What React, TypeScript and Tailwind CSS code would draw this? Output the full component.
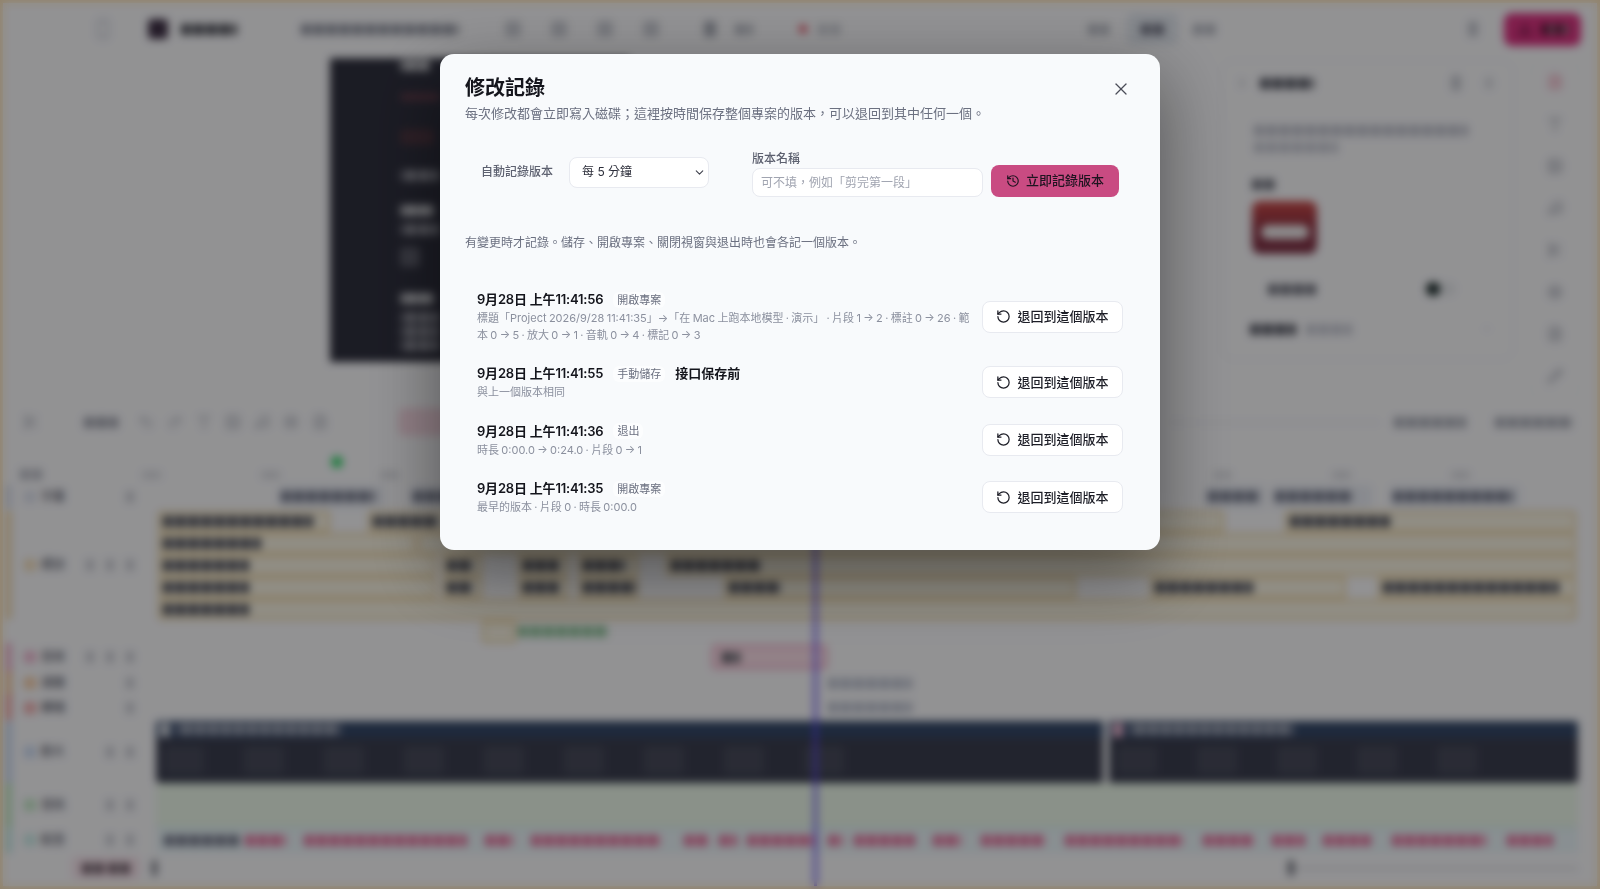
import {
  ChevronDown,
  ChevronRight,
  Download,
  FileText,
  History,
  Image,
  Music,
  Pencil,
  Redo2,
  RotateCcw,
  Scissors,
  Settings,
  Type,
  Undo2,
  X,
} from "lucide-react";

const FONT = "font-['Inter','Noto_Sans_CJK_TC',sans-serif]";

// =============================================================================
// BLURRED EDITOR BEHIND THE DIALOG
// =============================================================================

// Stands in for text that the blur has made unreadable
function Bar({ w, className = "bg-[#4a4c58]" }: { w: number; className?: string }) {
  return (
    <div
      className={`h-[11px] shrink-0 rounded-[2px] bg-[repeating-linear-gradient(90deg,transparent_0_9px,rgba(255,255,255,0.5)_9px_13px)] ${className}`}
      style={{ width: w }}
    />
  );
}

function TopBar() {
  return (
    <div className="flex h-[52px] shrink-0 items-center pl-[94px] pr-[16px]">
      <div className="h-5 w-3 rounded-[3px] border-2 border-[#bfc3cf]" />
      <div className="ml-[39px] h-5 w-5 rounded-[4px] bg-[#3d2f44]" />
      <Bar w={56} className="ml-[13px] bg-[#45464f]" />
      <Bar w={158} className="ml-[64px] bg-[#8b8e9b]" />
      <div className="ml-[46px] flex gap-[30px]">
        {[0, 1, 2, 3].map((i) => (
          <div key={i} className="h-4 w-4 rounded-[3px] bg-[#c6c8d0]" />
        ))}
      </div>
      <div className="ml-[45px] h-4 w-3 rounded-[3px] bg-[#a4a7b2]" />
      <Bar w={18} className="ml-[19px] bg-[#b0b3bd]" />
      <div className="ml-[46px] h-2 w-2 rounded-full bg-[#e0475c]" />
      <Bar w={23} className="ml-[11px] bg-[#c6c8d0]" />
      <div className="ml-auto flex items-center">
        <Bar w={21} className="bg-[#b0b3bd]" />
        <div className="ml-[18px] flex h-[32px] w-[51px] items-center justify-center rounded-md bg-[#dde2ea]">
          <Bar w={24} className="bg-[#6a6d7e]" />
        </div>
        <Bar w={23} className="ml-[15px] bg-[#b0b3bd]" />
        <div className="ml-[252px] h-4 w-[10px] rounded-[3px] bg-[#c0c2cb]" />
        <div className="ml-[26px] flex h-[33px] w-[77px] items-center justify-center gap-2 rounded-lg bg-[#d6337f]">
          <Download className="h-4 w-4 text-[#4a1030]" />
          <Bar w={28} className="bg-[#5a1638]" />
        </div>
      </div>
    </div>
  );
}

function PreviewArea() {
  return (
    <div className="flex h-[349px] shrink-0">
      {/* video preview, mostly hidden by the dialog */}
      <div className="ml-[327px] mt-[3px] h-[304px] w-[300px] shrink-0 bg-[#2e2f3d] pl-[70px] pt-[2px]">
        <Bar w={30} className="bg-[#a0a1a8]" />
        <div className="mt-[22px] h-2 w-[40px] rounded-sm bg-[#5c3a48]" />
        <div className="mt-[28px] h-4 w-[34px] rounded-sm bg-[#4c3540]" />
        <Bar w={38} className="mt-[25px] bg-[#6a6b78]" />
        <Bar w={34} className="mt-[24px] bg-[#a8a9b0]" />
        <Bar w={38} className="mt-[8px] bg-[#6a6b78]" />
        <div className="mt-[12px] h-5 w-5 rounded bg-[#5a5b68]" />
        <Bar w={34} className="mt-[26px] bg-[#a8a9b0]" />
        <Bar w={38} className="mt-[8px] bg-[#6a6b78]" />
        <Bar w={38} className="mt-[3px] bg-[#6a6b78]" />
        <Bar w={38} className="mt-[3px] bg-[#6a6b78]" />
      </div>

      {/* inspector panel */}
      <div className="ml-auto mt-[5px] flex h-[300px] w-[293px] shrink-0 flex-col rounded-xl border border-[#e6e7ec] pl-[12px] pr-[20px] pt-[14px]">
        <div className="flex h-4 items-center">
          <ChevronRight className="h-4 w-4 text-[#a4a7b2]" />
          <Bar w={54} className="ml-[10px] bg-[#4f515d]" />
          <div className="ml-auto h-4 w-[10px] rounded-[3px] bg-[#c4c6ce]" />
          <div className="ml-[24px] h-3 w-2 rounded-[2px] bg-[#d4d6dc]" />
        </div>
        <div className="ml-[18px] flex flex-col">
          <Bar w={214} className="ml-[2px] mt-[34px] bg-[#b8bac6]" />
          <Bar w={84} className="ml-[2px] mt-[6px] bg-[#c0c2cd]" />
          <Bar w={23} className="mt-[26px] bg-[#6a6c78]" />
          <div className="mt-[11px] h-[53px] w-[65px] overflow-hidden rounded-lg bg-gradient-to-b from-[#c84a48] via-[#8a3040] to-[#7a3348] pt-[24px]">
            <div className="mx-auto h-[14px] w-[48px] rounded-full bg-[#ece9ea]" />
          </div>
        </div>
        <div className="mt-[28px] flex h-[14px] items-center pl-[34px]">
          <Bar w={48} className="bg-[#6a6c78]" />
          <div className="ml-[110px] flex h-[14px] w-[30px] items-center rounded-full bg-[#e2e4e8]">
            <div className="h-[14px] w-[14px] rounded-full bg-[#1b2a2a]" />
          </div>
        </div>
        <div className="mt-[26px] flex h-[14px] items-center pl-[16px]">
          <Bar w={46} className="bg-[#4f515d]" />
          <Bar w={46} className="ml-[10px] bg-[#c0c2cd]" />
          <ChevronDown className="ml-auto h-3 w-3 text-[#c4c6ce]" />
        </div>
      </div>

      {/* tool rail */}
      <div className="ml-[16px] mr-[17px] mt-[8px] flex h-[334px] w-[50px] shrink-0 flex-col items-center gap-[26px] rounded-xl border border-[#eeeff2] pt-[10px] text-[#9497a4]">
        <FileText className="h-4 w-4 text-[#e8859f]" />
        <Type className="h-4 w-4" />
        <Image className="h-4 w-4" />
        <Music className="h-4 w-4" />
        <Scissors className="h-4 w-4" />
        <Settings className="h-4 w-4" />
        <FileText className="h-4 w-4" />
        <Pencil className="h-4 w-4" />
      </div>
    </div>
  );
}

function Toolbar() {
  return (
    <div className="flex h-[36px] shrink-0 items-center pl-[20px] pr-[24px] text-[#a4a7b2]">
      <Scissors className="h-4 w-4" />
      <Bar w={34} className="ml-[45px] bg-[#9a9ca8]" />
      <div className="ml-[20px] flex gap-[13px]">
        <Undo2 className="h-4 w-4" />
        <Redo2 className="h-4 w-4" />
        <Type className="h-4 w-4" />
        <Image className="h-4 w-4" />
        <Music className="h-4 w-4" />
        <Settings className="h-4 w-4" />
        <FileText className="h-4 w-4" />
      </div>
      <div className="ml-[70px] h-[28px] w-[50px] rounded-md bg-[#f0d3de]" />
      <div className="ml-[720px] h-px flex-1 bg-[#cfcfe0]" />
      <Bar w={72} className="ml-[14px] bg-[#a4a7b2]" />
      <Bar w={78} className="ml-[29px] bg-[#a4a7b2]" />
    </div>
  );
}

type Clip = { x: number; w: number; label?: number; tone?: string; labelTone?: string };
type Track = {
  label: string;
  accent: string;
  h: number;
  rows: { h: number; clips: Clip[] }[];
};

const TAN = "bg-[#f1ecdd] border-2 border-[#e3c78f]";
const GHOST = "bg-[#e4e7ef]";

const TRACKS: Track[] = [
  {
    label: "字幕",
    accent: "bg-[#c4cce0]",
    h: 24,
    rows: [
      {
        h: 24,
        clips: [
          { x: 128, w: 106, label: 94, tone: GHOST, labelTone: "bg-[#6c7184]" },
          { x: 260, w: 280, label: 40, tone: GHOST, labelTone: "bg-[#6c7184]" },
          { x: 1055, w: 60, label: 52, tone: GHOST, labelTone: "bg-[#6c7184]" },
          { x: 1122, w: 100, label: 78, tone: GHOST, labelTone: "bg-[#6c7184]" },
          { x: 1240, w: 130, label: 120, tone: GHOST, labelTone: "bg-[#6c7184]" },
        ],
      },
    ],
  },
  {
    label: "標註",
    accent: "bg-[#e7c78e]",
    h: 108,
    rows: [
      {
        h: 22,
        clips: [
          { x: 8, w: 172, label: 150 },
          { x: 218, w: 856, label: 66 },
          { x: 1135, w: 291, label: 100 },
        ],
      },
      { h: 22, clips: [{ x: 8, w: 258, label: 98 }, { x: 268, w: 1158 }] },
      {
        h: 22,
        clips: [
          { x: 8, w: 278, label: 86 },
          { x: 292, w: 40, label: 26 },
          { x: 368, w: 50, label: 36 },
          { x: 428, w: 60, label: 42 },
          { x: 516, w: 910, label: 90 },
        ],
      },
      {
        h: 22,
        clips: [
          { x: 8, w: 278, label: 86 },
          { x: 292, w: 40, label: 26 },
          { x: 368, w: 50, label: 36 },
          { x: 428, w: 60, label: 56 },
          { x: 574, w: 352, label: 52 },
          { x: 1000, w: 196, label: 98 },
          { x: 1228, w: 198, label: 176 },
        ],
      },
      { h: 22, clips: [{ x: 8, w: 1418, label: 86 }] },
    ],
  },
];

function ClipBlock({ clip, height }: { clip: Clip; height: number }) {
  return (
    <div
      className={`absolute top-0 flex items-center overflow-hidden rounded-[3px] pl-[3px] ${clip.tone ?? TAN}`}
      style={{ left: clip.x, width: clip.w, height }}
    >
      {clip.label ? <Bar w={clip.label} className={clip.labelTone ?? "bg-[#4b4c56]"} /> : null}
    </div>
  );
}

function TrackHead({ label, accent, h, icons = 1 }: { label: string; accent: string; h: number; icons?: number }) {
  return (
    <div className="flex w-[147px] shrink-0 items-center pl-[4px]" style={{ height: h }}>
      <div className={`h-full w-[4px] ${accent}`} />
      <div className={`ml-[13px] h-3 w-3 rounded-[3px] opacity-60 ${accent}`} />
      <span className="ml-[5px] text-[12px] font-medium text-[#555766]">{label}</span>
      <div className="ml-auto mr-[16px] flex gap-[12px]">
        {Array.from({ length: icons }).map((_, i) => (
          <div key={i} className="h-3 w-2 rounded-[2px] bg-[#c6c8d0]" />
        ))}
      </div>
    </div>
  );
}

function ClipTrack({ track, icons }: { track: Track; icons: number }) {
  return (
    <div className="flex">
      <TrackHead label={track.label} accent={track.accent} h={track.h} icons={icons} />
      <div className="flex min-w-0 flex-1 flex-col">
        {track.rows.map((row, i) => (
          <div key={i} className="relative" style={{ height: row.h }}>
            {row.clips.map((clip, j) => (
              <ClipBlock key={j} clip={clip} height={row.h - 1} />
            ))}
          </div>
        ))}
      </div>
    </div>
  );
}

function Ticks() {
  return (
    <div className="flex h-[45px] shrink-0 items-end pb-[6px] pl-[17px]">
      <Bar w={22} className="mb-[-1px] bg-[#b4b6c0]" />
      <div className="ml-[100px] flex gap-[100px]">
        {Array.from({ length: 12 }).map((_, i) => (
          <div key={i} className="h-2 w-[19px] rounded-[2px] bg-[#d6d7dd]" />
        ))}
      </div>
    </div>
  );
}

// [start, width] of each caption on the voice track, from the left of the track
const CAPTION_MARKS = [
  [89, 41],
  [148, 163],
  [329, 28],
  [375, 130],
  [528, 25],
  [563, 18],
  [591, 68],
  [672, 15],
  [698, 61],
  [777, 28],
  [825, 64],
  [909, 118],
  [1047, 51],
  [1116, 33],
  [1167, 48],
  [1236, 94],
  [1351, 46],
];

function Timeline() {
  return (
    <div className="relative flex min-h-0 flex-1 flex-col">
      <Ticks />
      <ClipTrack track={TRACKS[0]} icons={1} />
      <div className="h-[2px]" />
      <ClipTrack track={TRACKS[1]} icons={3} />

      {/* speech marker row sits below the tan block */}
      <div className="flex h-[18px]">
        <div className="w-[147px] shrink-0" />
        <div className="ml-[332px] h-[22px] w-[34px] rounded-[3px] border-2 border-[#e3c78f] bg-[#f1ecdd]" />
        <Bar w={90} className="ml-[2px] mt-[5px] bg-[#86bb92]" />
      </div>

      <div className="mt-[4px] flex h-[28px] items-center">
        <TrackHead label="音效" accent="bg-[#e28ab3]" h={28} icons={3} />
        <div className="ml-[562px] flex h-[24px] w-[115px] items-center rounded-[4px] border-2 border-[#e98fb2] bg-[#f3d8e2] pl-2">
          <Bar w={18} className="bg-[#5a5560]" />
        </div>
      </div>
      <div className="flex h-[24px] items-center">
        <TrackHead label="濾鏡" accent="bg-[#ecaa6c]" h={24} />
        <Bar w={84} className="ml-[678px] bg-[#b5bac9]" />
      </div>
      <div className="flex h-[25px] items-center">
        <TrackHead label="轉場" accent="bg-[#e57878]" h={25} />
        <Bar w={84} className="ml-[678px] bg-[#b5bac9]" />
      </div>

      {/* screen recording track */}
      <div className="mt-[1px] flex h-[62px]">
        <TrackHead label="影片" accent="bg-[#a9c2ea]" h={62} icons={2} />
        <div className="ml-[6px] mr-[19px] flex min-w-0 flex-1 gap-[6px] overflow-hidden rounded-[4px]">
          {[947, 469].map((w, i) => (
            <div key={i} className="flex shrink-0 flex-col bg-[#3a3d4e]" style={{ width: w }}>
              <div className="flex h-[17px] items-center bg-[#334666] pl-[4px]">
                <div className={`h-[14px] w-[10px] rounded-[2px] ${i === 0 ? "bg-[#d6d8de]" : "bg-[#f0b8d0]"}`} />
                <Bar w={165} className="ml-[6px] bg-[#7a8296]" />
              </div>
              <div className="mt-[8px] flex gap-[40px] pl-[8px]">
                {Array.from({ length: i === 0 ? 9 : 5 }).map((_, k) => (
                  <div key={k} className="h-[28px] w-[40px] rounded-sm bg-[#464959]" />
                ))}
              </div>
            </div>
          ))}
        </div>
      </div>

      {/* audio track */}
      <div className="flex h-[44px]">
        <TrackHead label="音訊" accent="bg-[#9ad69f]" h={44} icons={2} />
        <div className="ml-[6px] mr-[19px] flex-1 bg-[#e6f2e4]" />
      </div>

      {/* voice track with the caption marks */}
      <div className="flex h-[26px]">
        <TrackHead label="配音" accent="bg-[#a3dcd6]" h={26} icons={2} />
        <div className="relative ml-[6px] mr-[19px] flex min-w-0 flex-1 items-center border-t border-[#bcdde6] bg-[#e4eff3] pl-[8px]">
          <Bar w={76} className="bg-[#6c7184]" />
          {CAPTION_MARKS.map(([x, w]) => (
            <div
              key={x}
              className="absolute top-[7px] h-[11px] rounded-[2px] bg-[#dd6d98] bg-[repeating-linear-gradient(90deg,transparent_0_9px,rgba(255,255,255,0.5)_9px_13px)]"
              style={{ left: x, width: w }}
            />
          ))}
        </div>
      </div>

      {/* scrollbar row */}
      <div className="flex h-[30px] items-center">
        <div className="ml-[70px] flex h-5 w-[66px] items-center justify-center gap-1 rounded-[3px] border border-[#eeb6cc] bg-[#f3e2e9]">
          <Bar w={22} className="bg-[#6d5a66]" />
          <Bar w={22} className="bg-[#6d5a66]" />
        </div>
        <div className="ml-[13px] h-4 w-[5px] rounded-sm bg-[#6c6e78]" />
        <div className="ml-[1131px] h-4 w-[6px] rounded-sm bg-[#6c6e78]" />
        <div className="h-[3px] flex-1 bg-[#d4d5da]" />
        <div className="w-[19px]" />
      </div>

      {/* the playhead and the green marker lie over the tracks */}
      <div className="absolute bottom-0 left-[811px] top-[99px] w-[3px] bg-[#5b46ee]" />
      <div className="absolute left-[328px] top-[16px] h-3 w-3 rounded-full bg-[#36d06a]" />
    </div>
  );
}

function Editor() {
  return (
    <div className="flex h-[889px] w-[1600px] flex-col overflow-hidden border-[3px] border-[#f4dcb4] bg-[#f3f3f6]">
      <TopBar />
      <PreviewArea />
      <Toolbar />
      <Timeline />
    </div>
  );
}

// =============================================================================
// HISTORY DIALOG
// =============================================================================

interface VersionEntry {
  time: string;
  source: string;
  name?: string;
  summary: string;
}

const VERSIONS: VersionEntry[] = [
  {
    time: "9月28日 上午11:41:56",
    source: "開啟專案",
    summary:
      "標題「Project 2026/9/28 11:41:35」→「在 Mac 上跑本地模型 · 演示」 · 片段 1 → 2 · 標註 0 → 26 · 範本 0 → 5 · 放大 0 → 1 · 音軌 0 → 4 · 標記 0 → 3",
  },
  {
    time: "9月28日 上午11:41:55",
    source: "手動儲存",
    name: "接口保存前",
    summary: "與上一個版本相同",
  },
  {
    time: "9月28日 上午11:41:36",
    source: "退出",
    summary: "時長 0:00.0 → 0:24.0 · 片段 0 → 1",
  },
  {
    time: "9月28日 上午11:41:35",
    source: "開啟專案",
    summary: "最早的版本 · 片段 0 · 時長 0:00.0",
  },
];

function VersionRow({ version }: { version: VersionEntry }) {
  return (
    <div className="flex items-center gap-[12px] py-[8px] pl-[12px] pr-[12px]">
      <div className="min-w-0 flex-1">
        <div className="flex items-center">
          <span className="text-[13px] font-semibold leading-[20px] tracking-[-0.2px] text-[#14151c]">
            {version.time}
          </span>
          <span className="ml-[10px] mt-[1px] rounded-md bg-white/60 px-[4px] text-[11px] leading-[16px] text-[#6b7080]">
            {version.source}
          </span>
          {version.name && (
            <span className="ml-[10px] text-[13px] font-semibold leading-[20px] text-[#14151c]">
              {version.name}
            </span>
          )}
        </div>
        <p className="mt-[1px] text-[11px] leading-[16.5px] text-[#8b909e] [word-spacing:-0.75px]">
          {version.summary}
        </p>
      </div>
      <button className="mt-[1px] flex h-[32px] w-[141px] shrink-0 items-center justify-center gap-[6px] rounded-[8px] border border-[#e8eaf0] bg-white text-[13px] font-medium text-[#1c1d26]">
        <RotateCcw className="h-[15px] w-[15px]" />
        退回到這個版本
      </button>
    </div>
  );
}

function HistoryDialog() {
  return (
    <div className="relative h-[496px] w-[720px] rounded-[14px] bg-[#f8fafc] px-[25px] pt-[20px] shadow-[0_24px_70px_rgba(0,0,0,0.45)]">
      <button className="absolute right-[29px] top-[25px] text-[#4a4c58]">
        <X className="h-[20px] w-[20px]" strokeWidth={1.5} />
      </button>

      <h2 className="text-[20px] font-semibold leading-[28px] text-[#14151c]">修改記錄</h2>
      <p className="mt-[1px] text-[13px] leading-[20px] text-[#6b7080]">
        每次修改都會立即寫入磁碟；這裡按時間保存整個專案的版本，可以退回到其中任何一個。
      </p>

      <div className="mt-[27px] flex items-end pl-[16px] pr-[16px]">
        <div className="flex h-[44px] shrink-0 items-center self-start">
          <span className="whitespace-nowrap text-[12px] font-medium text-[#5d6170]">自動記錄版本</span>
          <div className="relative ml-[16px]">
            <select
              defaultValue="5"
              className="h-[31px] w-[140px] appearance-none rounded-[8px] border border-[#e8eaf0] bg-white px-[12px] text-[12px] text-[#2c2e3a]"
            >
              <option value="5">每 5 分鐘</option>
              <option value="10">每 10 分鐘</option>
            </select>
            <ChevronDown className="pointer-events-none absolute right-[3px] top-[9px] h-[13px] w-[13px] text-[#3f414d]" />
          </div>
        </div>
        <div className="ml-[43px] flex flex-col">
          <label className="translate-y-[1px] text-[12px] font-medium leading-[16px] text-[#5d6170]">版本名稱</label>
          <input
            placeholder="可不填，例如「剪完第一段」"
            className="mt-[2px] h-[29px] w-[231px] rounded-[8px] border border-[#e8eaf0] bg-white px-[8px] text-[12px] outline-none placeholder:text-[#a0a4b0]"
          />
        </div>
        <button className="ml-[8px] flex h-[32px] w-[129px] items-center justify-center gap-[6px] rounded-[8px] bg-[#c94b82] text-[13px] font-medium text-[#1f1420]">
          <History className="h-[14px] w-[14px]" />
          立即記錄版本
        </button>
      </div>

      <p className="mt-[37px] text-[12px] leading-[18px] text-[#6b7080]">
        有變更時才記錄。儲存、開啟專案、關閉視窗與退出時也會各記一個版本。
      </p>

      <div className="mt-[29px] flex flex-col gap-[4px]">
        {VERSIONS.map((version) => (
          <VersionRow key={version.time} version={version} />
        ))}
      </div>
    </div>
  );
}

export default function App() {
  return (
    <div className={`relative h-[889px] w-[1600px] overflow-hidden ${FONT}`}>
      <Editor />
      <div className="absolute inset-0 flex justify-center bg-black/40 pt-[54px] backdrop-blur-[4px]">
        <HistoryDialog />
      </div>
    </div>
  );
}
